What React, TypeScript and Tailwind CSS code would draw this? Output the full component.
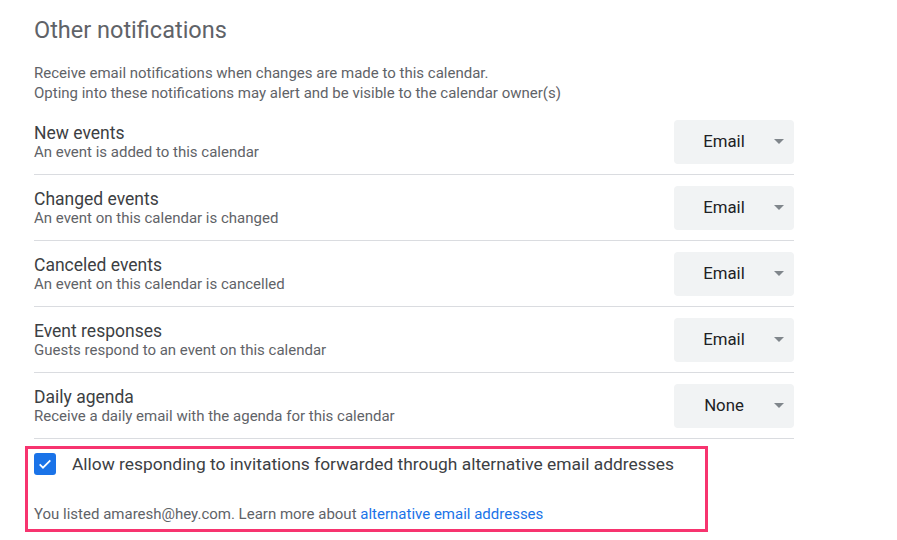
import React from "react"

const rows = [
  { title: "New events", sub: "An event is added to this calendar", value: "Email" },
  { title: "Changed events", sub: "An event on this calendar is changed", value: "Email" },
  { title: "Canceled events", sub: "An event on this calendar is cancelled", value: "Email" },
  { title: "Event responses", sub: "Guests respond to an event on this calendar", value: "Email" },
  { title: "Daily agenda", sub: "Receive a daily email with the agenda for this calendar", value: "None" },
]

function Select({ value }: { value: string }) {
  return (
    <div className="flex h-[44px] w-[120px] items-center rounded-[4px] bg-[#f1f3f4]">
      <span className="flex-1 text-center text-[16.8px] text-[#202124]">{value}</span>
      <svg width="10" height="5" viewBox="0 0 10 5" className="mr-[10px]">
        <path d="M0 0h10L5 5z" fill="#80868b" />
      </svg>
    </div>
  )
}

export default function App() {
  return (
    <div className="min-h-screen bg-white pl-[34px] pt-[16px] font-['Roboto',sans-serif]">
      <div className="w-[760px]">
        {/* Header */}
        <h2 className="text-[23.5px] leading-[28px] text-[#5f6368]">Other notifications</h2>
        <p className="mt-[20px] text-[15px] leading-[19.5px] text-[#5f6368]">
          Receive email notifications when changes are made to this calendar.
          <br />
          Opting into these notifications may alert and be visible to the calendar owner(s)
        </p>

        {/* Rows */}
        <div className="mt-[6px]">
          {rows.map((r) => (
            <div key={r.title} className="flex h-[66px] items-center justify-between border-b border-[#dadce0]">
              <div className="pt-[1px]">
                <div className="text-[17.5px] leading-[20px] text-[#3c4043]">{r.title}</div>
                <div className="text-[15px] leading-[18px] text-[#5f6368]">{r.sub}</div>
              </div>
              <Select value={r.value} />
            </div>
          ))}
        </div>

        {/* Alternative addresses */}
        <div className="ml-[-9px] mt-[7px] w-[683px] border-[3px] border-[#f7346f] pb-[5px] pl-[6px] pt-[4px]">
          <label className="flex items-center gap-[16px]">
            <span className="flex h-[22px] w-[22px] items-center justify-center rounded-[3px] bg-[#1a73e8]">
              <svg width="16" height="16" viewBox="0 0 24 24">
                <path d="M4 12.5l5 5L20 6.5" fill="none" stroke="white" strokeWidth="2.6" />
              </svg>
            </span>
            <span className="text-[17.4px] leading-[22px] text-[#3c4043]">
              Allow responding to invitations forwarded through alternative email addresses
            </span>
          </label>
          <p className="mt-[29px] text-[15px] leading-[20px] text-[#5f6368]">
            You listed amaresh@hey.com. Learn more about{" "}
            <a className="text-[#1a73e8]">alternative email addresses</a>
          </p>
        </div>
      </div>
    </div>
  )
}
